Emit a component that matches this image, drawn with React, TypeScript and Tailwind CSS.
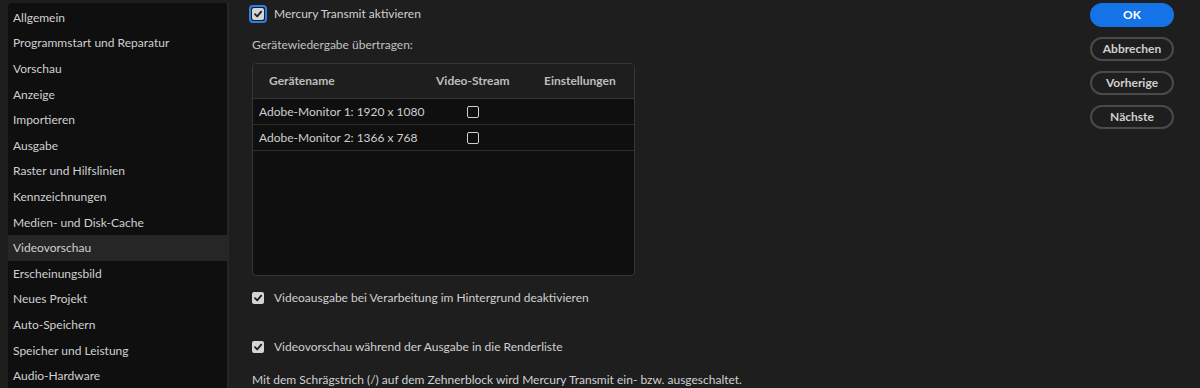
import React from 'react';

const items = [
  'Allgemein',
  'Programmstart und Reparatur',
  'Vorschau',
  'Anzeige',
  'Importieren',
  'Ausgabe',
  'Raster und Hilfslinien',
  'Kennzeichnungen',
  'Medien- und Disk-Cache',
  'Videovorschau',
  'Erscheinungsbild',
  'Neues Projekt',
  'Auto-Speichern',
  'Speicher und Leistung',
  'Audio-Hardware',
];

function Check({ checked = true, size = 12 }: { checked?: boolean; size?: number }) {
  if (!checked) {
    return <span className="block w-[12px] h-[12px] rounded-[2px] border-[1.5px] border-[#cfcfcf]" />;
  }
  return (
    <span className="flex items-center justify-center rounded-[2px] bg-[#d4d4d4]" style={{ width: size, height: size }}>
      <svg width="10" height="10" viewBox="0 0 10 10">
        <path d="M2 5.2 L4.2 7.4 L8.2 2.6" fill="none" stroke="#1e1e1e" strokeWidth="1.8" strokeLinecap="round" strokeLinejoin="round" />
      </svg>
    </span>
  );
}

export default function App() {
  return (
    <div className="w-[1200px] h-[388px] overflow-hidden bg-[#1e1e1e] flex text-[12px] text-[#d0d0d0]" style={{ fontFamily: 'Lato, "Noto Sans", sans-serif' }}>
      {/* sidebar */}
      <div className="ml-[8px] mt-[3px] w-[221px] bg-[#0f0f0f] rounded-tl-[4px] pt-[2px] border-r-[2px] border-[#262626]">
        {items.map((it) => (
          <div key={it} className={'h-[25.6px] flex items-center pl-[5px] ' + (it === 'Videovorschau' ? 'bg-[#262626]' : '')}>
            {it}
          </div>
        ))}
      </div>

      {/* main */}
      <div className="flex-1 pl-[20px] pt-[4px] flex flex-col">
        <div className="flex items-center h-[20px] shrink-0">
          <span className="flex items-center justify-center w-[18px] h-[18px] rounded-[4px] border-[2px] border-[#2d7fe8]">
            <Check />
          </span>
          <span className="ml-[7px]">Mercury Transmit aktivieren</span>
        </div>
        <div className="ml-[3px] mt-[12px] leading-[18px] text-[#c2c2c2] shrink-0">Gerätewiedergabe übertragen:</div>

        <div className="ml-[3px] mt-[9px] w-[383px] h-[213px] shrink-0 rounded-[4px] border border-[#363636] bg-[#0f0f0f] overflow-hidden">
          <div className="h-[35px] bg-[#1e1e1e] flex items-center font-bold text-[#bdbdbd] border-b border-[#363636]">
            <span className="ml-[16px] w-[167px]">Gerätename</span>
            <span className="w-[108px]">Video-Stream</span>
            <span>Einstellungen</span>
          </div>
          {['Adobe-Monitor 1: 1920 x 1080', 'Adobe-Monitor 2: 1366 x 768'].map((r) => (
            <div key={r} className="h-[26px] flex items-center border-b border-[#2c2c2c]">
              <span className="ml-[6px] w-[208px]">{r}</span>
              <Check checked={false} />
            </div>
          ))}
        </div>

        <div className="ml-[3px] mt-[13px] flex items-center h-[18px] shrink-0">
          <Check />
          <span className="ml-[10px]">Videoausgabe bei Verarbeitung im Hintergrund deaktivieren</span>
        </div>
        <div className="ml-[3px] mt-[31px] flex items-center h-[18px] shrink-0">
          <Check />
          <span className="ml-[10px]">Videovorschau während der Ausgabe in die Renderliste</span>
        </div>
        <div className="ml-[3px] mt-[15px] leading-[18px] shrink-0">
          Mit dem Schrägstrich (/) auf dem Zehnerblock wird Mercury Transmit ein- bzw. ausgeschaltet.
        </div>
      </div>

      {/* buttons */}
      <div className="w-[110px] pt-[3px] flex flex-col gap-[10px] font-bold">
        <button className="w-[84px] h-[24px] rounded-full bg-[#1473e6] text-white">OK</button>
        <button className="w-[84px] h-[24px] rounded-full border-[2px] border-[#4a4a4a] text-[#cfcfcf]">Abbrechen</button>
        <button className="w-[84px] h-[24px] rounded-full border-[2px] border-[#4a4a4a] text-[#cfcfcf]">Vorherige</button>
        <button className="w-[84px] h-[24px] rounded-full border-[2px] border-[#4a4a4a] text-[#cfcfcf]">Nächste</button>
      </div>
    </div>
  );
}
